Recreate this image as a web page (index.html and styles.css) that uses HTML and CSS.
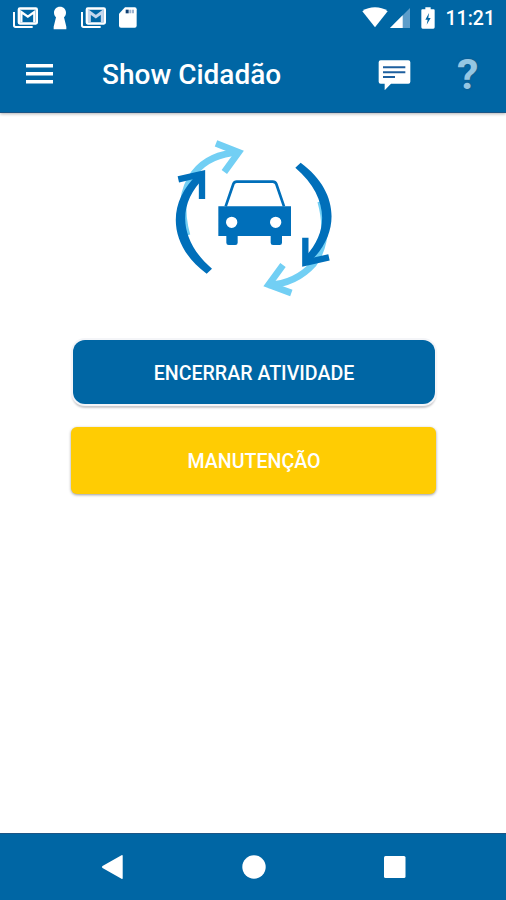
FILE: index.html
```html
<!DOCTYPE html>
<html lang="pt-BR">
<head>
  <meta charset="UTF-8">
  <meta name="viewport" content="width=device-width, initial-scale=1.0">
  <title>Show Cidadão</title>
  <link rel="stylesheet" href="styles.css">
</head>
<body>
  <header class="header">
    <div class="status-bar">
      <div class="status-left">
        <svg class="icon-mail" width="25" height="22" viewBox="0 0 75 66" fill="none" stroke="#fff">
          <path d="M3 15v40q0 5 5 5h51" stroke-width="6"/>
          <rect x="17.500" y="4.500" width="54" height="45" rx="3" stroke-width="7"/>
          <path d="M25 46V15l19.500 14L64 15v31" stroke-width="7"/>
        </svg>
        <svg class="icon-keyhole" width="14" height="24" viewBox="0 0 42 72" fill="#fff">
          <path d="M21 2c11 0 18 8 18 18 0 7-3 11-6 14l7 28v8H2v-8l7-28c-3-3-6-7-6-14C3 10 10 2 21 2z"/>
        </svg>
        <svg class="icon-mail" width="25" height="22" viewBox="0 0 75 66" fill="none" stroke="#fff">
          <path d="M3 15v40q0 5 5 5h51" stroke-width="6"/>
          <rect x="17.500" y="4.500" width="54" height="45" rx="3" stroke-width="7"/>
          <path d="M25 46V15l19.500 14L64 15v31" stroke-width="9" stroke="#c3d6ec"/>
        </svg>
        <svg class="icon-sd" width="18" height="21" viewBox="0 0 54 63">
          <path d="M18 1h29q6 0 6 6v49q0 6-6 6H6q-6 0-6-6V20z" fill="#fff"/>
          <path d="M20 8h9v11h-9z" fill="#0f3f73"/>
          <path d="M31 8h6v11h-6zM39 8h6v11h-6z" fill="#9db3d0"/>
        </svg>
      </div>
      <div class="status-right">
        <svg class="icon-wifi" width="26" height="21" viewBox="0 0 78 63" fill="#fff">
          <path d="M39 61L1 13C12 4 25 1 39 1s27 3 38 12z"/>
        </svg>
        <svg class="icon-signal" width="20" height="20" viewBox="0 0 60 60">
          <path d="M0 60L60 0v60z" fill="#5d9dca"/>
          <path d="M0 60L38 22v38z" fill="#fff"/>
        </svg>
        <svg class="icon-battery" width="14" height="22" viewBox="0 0 42 66">
          <path d="M13 1h16v6h9q3 0 3 3v51q0 4-4 4H5q-4 0-4-4V10q0-3 3-3h9z" fill="#fff"/>
          <path d="M24 18L13 38h7l-3 15 12-20h-7z" fill="#0066a4"/>
        </svg>
        <span class="clock">11:21</span>
      </div>
    </div>
    <div class="toolbar">
      <svg class="icon-menu" width="28" height="20" viewBox="0 0 28 20" fill="#fff">
        <path d="M0 0h27v3.500H0zM0 8h27v3.500H0zM0 16h27v3.500H0z"/>
      </svg>
      <h1 class="title">Show Cidadão</h1>
      <svg class="icon-message" width="33" height="31" viewBox="0 0 99 93">
        <path d="M8 1h83q6 0 6 6v58q0 6-6 6H39L20 91V71H8q-6 0-6-6V7q0-6 6-6z" fill="#fff"/>
        <path d="M15 22h67M15 37h67M15 51h36" stroke="#1e5f9e" stroke-width="6" fill="none"/>
      </svg>
      <span class="help">?</span>
    </div>
  </header>

  <main class="content">
    <svg class="logo" width="180" height="180" viewBox="0 0 540 540" fill="none">
      <g stroke="#72cff4" stroke-width="20">
        <path d="M66 316C46 245 51 181 88 129 118 90 164 70 222 67"/>
        <path d="M153 40l68 27-43 59"/>
        <path d="M467 214C487 285 482 348 446 401 412 439 368 462 310 465"/>
        <path d="M379 489l-68-25 43-59"/>
      </g>
      <path d="M125 431C8 345 5 218 98 133l20 10C38 218 38 328 141 416z" fill="#006fba"/>
      <path d="M407 98C524 184 527 311 434 396l-20-10C494 311 494 201 391 113z" fill="#006fba"/>
      <g stroke="#006fba" stroke-width="19">
        <path d="M40 148l71-16v75"/>
        <path d="M492 382l-71 16v-75"/>
      </g>
      <path d="M182 229l23-67q3-7 10-7h108q8 0 11 7l23 67" stroke="#006fba" stroke-width="8"/>
      <path fill="#006fba" fill-rule="evenodd" d="M160 229h218v89h-27v20q0 7-7 7h-20q-7 0-7-7v-20H218v20q0 7-7 7h-20q-7 0-7-7v-20h-24zM200 260a17 17 0 1 0 0 34 17 17 0 1 0 0-34zM332 260a17 17 0 1 0 0 34 17 17 0 1 0 0-34z"/>
    </svg>
    <button class="btn btn-blue">ENCERRAR ATIVIDADE</button>
    <button class="btn btn-yellow">MANUTENÇÃO</button>
  </main>

  <nav class="nav-bar">
    <svg width="24" height="26" viewBox="0 0 24 26" fill="#fff">
      <path d="M20.500 1.200q1.200-.6 1.200.8v22q0 1.400-1.200.7L1.500 13.900q-1.300-.9 0-1.800z"/>
    </svg>
    <svg width="24" height="24" viewBox="0 0 24 24" fill="#fff">
      <circle cx="12" cy="12" r="11.700"/>
    </svg>
    <svg width="24" height="24" viewBox="0 0 24 24" fill="#fff">
      <rect x="1" y="1" width="21.500" height="22" rx="1.500"/>
    </svg>
  </nav>
</body>
</html>
```

FILE: styles.css
```css
* {
  box-sizing: border-box;
}
body {
  font-family: Roboto, "Liberation Sans", sans-serif;
  margin: 0;
  height: 900px;
  display: flex;
  flex-direction: column;
  background-color: #fff;
  overflow: hidden;
}
svg {
  display: block;
  flex: none;
}
.header {
  height: 113px;
  background-color: #0066a4;
  border-bottom: 1px solid #1c5585;
  box-shadow: 0 1px 3px rgba(0, 0, 0, 0.3);
  color: #fff;
}
.status-bar {
  height: 36px;
  display: flex;
  justify-content: space-between;
  padding: 0 11px 0 13px;
}
.status-left, .status-right {
  display: flex;
  align-items: center;
}
.status-left {
  height: 35px;
}
.icon-keyhole {
  margin: 0 14px 0 15px;
}
.icon-sd {
  margin-left: 13px;
}
.icon-wifi {
  margin-bottom: 2px;
}
.icon-signal {
  margin-left: 2px;
}
.icon-battery {
  margin: 0 11px;
}
.clock {
  font-size: 19.500px;
  font-weight: 500;
  line-height: 36px;
  padding-top: 1px;
}
.toolbar {
  height: 76px;
  display: flex;
  align-items: center;
  padding: 0 29px 0 26px;
}
.icon-menu {
  margin-right: 48px;
}
.title {
  flex: 1;
  margin: 0;
  font-size: 28px;
  font-weight: 500;
  line-height: 76px;
  padding-top: 2px;
}
.icon-message {
  margin-right: 46px;
  margin-top: 2px;
}
.help {
  font-size: 43px;
  font-weight: 700;
  line-height: 76px;
  width: 20px;
  text-align: center;
  color: #94c6e3;
  text-shadow: 0 0 2px #214d73;
}
.content {
  flex: 1;
  display: flex;
  flex-direction: column;
  align-items: center;
  padding-top: 17px;
}
.logo {
  margin-left: 4px;
}
.btn {
  border: none;
  padding: 2px 0 0 1px;
  color: #fff;
  font-family: inherit;
  font-size: 19.600px;
  font-weight: 500;
  cursor: pointer;
}
.btn-blue {
  width: 362px;
  height: 64px;
  margin: 30px 0 0 1px;
  background-color: #0066a4;
  border-radius: 12px;
  box-shadow: 0 0 0 2px #f4f5f8, 0 3px 2px 1px #c9c9cc;
}
.btn-yellow {
  width: 365px;
  height: 67px;
  margin: 23px 0 0 1px;
  padding-top: 1px;
  background-color: #ffcc03;
  border-radius: 6px;
  box-shadow: 0 1px 3px rgba(0, 0, 0, 0.4);
}
.nav-bar {
  height: 67px;
  display: flex;
  align-items: center;
  justify-content: center;
  gap: 117px;
  padding-left: 1px;
  background-color: #0066a4;
  border-top: 1px solid #1c5585;
}
```
